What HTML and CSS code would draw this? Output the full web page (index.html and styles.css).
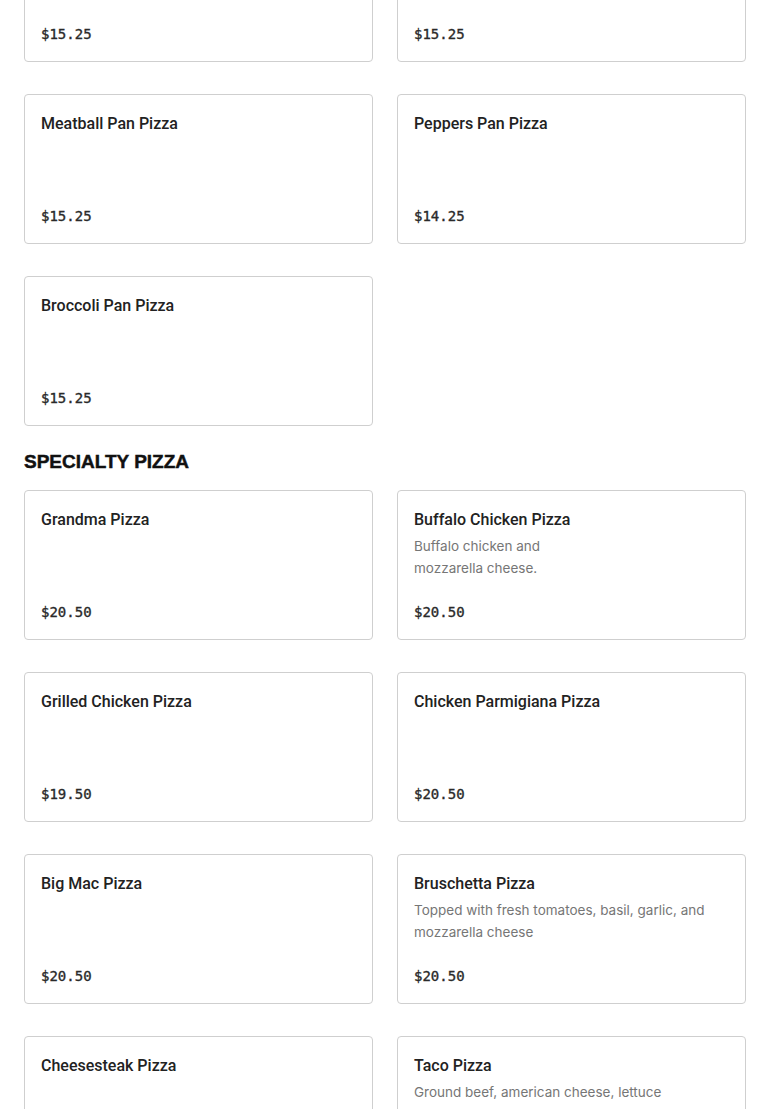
FILE: index.html
```html
<!DOCTYPE html>
<html>
<head>
<meta charset="utf-8">
<link rel="stylesheet" href="styles.css">
</head>
<body>
<main class="menu">
  <section class="grid grid-first">
    <div class="card"><div class="title">Sausage Pan Pizza</div><div class="price">$15.25</div></div>
    <div class="card"><div class="title">Mushroom Pan Pizza</div><div class="price">$15.25</div></div>
    <div class="card"><div class="title">Meatball Pan Pizza</div><div class="price">$15.25</div></div>
    <div class="card"><div class="title">Peppers Pan Pizza</div><div class="price">$14.25</div></div>
    <div class="card"><div class="title">Broccoli Pan Pizza</div><div class="price">$15.25</div></div>
  </section>
  <h2 class="section-title">SPECIALTY PIZZA</h2>
  <section class="grid">
    <div class="card"><div class="title">Grandma Pizza</div><div class="price">$20.50</div></div>
    <div class="card"><div class="title">Buffalo Chicken Pizza</div><div class="desc">Buffalo chicken and<br>mozzarella cheese.</div><div class="price">$20.50</div></div>
    <div class="card"><div class="title">Grilled Chicken Pizza</div><div class="price">$19.50</div></div>
    <div class="card"><div class="title">Chicken Parmigiana Pizza</div><div class="price">$20.50</div></div>
    <div class="card"><div class="title">Big Mac Pizza</div><div class="price">$20.50</div></div>
    <div class="card"><div class="title">Bruschetta Pizza</div><div class="desc">Topped with fresh tomatoes, basil, garlic, and mozzarella cheese</div><div class="price">$20.50</div></div>
    <div class="card"><div class="title">Cheesesteak Pizza</div><div class="price">$20.50</div></div>
    <div class="card"><div class="title">Taco Pizza</div><div class="desc">Ground beef, american cheese, lettuce</div><div class="price">$20.50</div></div>
  </section>
</main>
</body>
</html>
```
FILE: styles.css
```css
html, body {
  margin: 0;
  padding: 0;
  background: #fff;
}
.menu {
  padding: 0 24px;
  font-family: Roboto, "Liberation Sans", sans-serif;
}
.grid {
  display: grid;
  grid-template-columns: 1fr 1fr;
  column-gap: 24px;
  row-gap: 32px;
}
.grid-first {
  margin-top: -88px;
}
.card {
  box-sizing: border-box;
  min-height: 150px;
  border: 1px solid #cfcfcf;
  border-radius: 4px;
  padding: 16px;
  display: flex;
  flex-direction: column;
}
.title {
  padding-top: 1px;
  font-size: 16px;
  line-height: 24px;
  font-weight: 500;
  color: #222;
}
.desc {
  margin-top: 3px;
  font-family: Inter, Roboto, sans-serif;
  font-size: 13.5px;
  line-height: 22px;
  color: #767676;
  padding-right: 10px;
}
.price {
  margin-top: auto;
  padding-top: 22px;
  font-family: "DejaVu Sans Mono", "Liberation Mono", monospace;
  font-size: 14px;
  line-height: 22px;
  font-weight: 400;
  -webkit-text-stroke: 0.35px #2a2a2a;
  color: #2a2a2a;
}
.section-title {
  margin: 24px 0 16px;
  font-family: "Liberation Sans", Arial, sans-serif;
  font-weight: 900;
  font-size: 19px;
  line-height: 24px;
  -webkit-text-stroke: 0.45px #111;
  color: #111;
}
```
